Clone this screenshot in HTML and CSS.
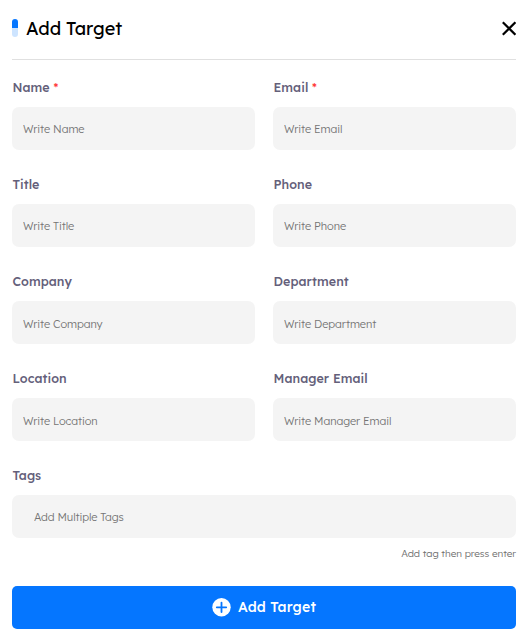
FILE: index.html
```html
<!DOCTYPE html>
<html lang="en">
<head>
<meta charset="utf-8">
<title>Add Target</title>
<link rel="stylesheet" href="styles.css">
</head>
<body>
<form class="panel">
  <header class="header">
    <span class="marker"></span>
    <h1 class="title">Add Target</h1>
    <button class="close" type="button" aria-label="Close">
      <svg width="14" height="15" viewBox="0 0 14 15"><path d="M0.8 1.2 13.4 13.8M13.4 1.2 0.8 13.8" stroke="#000" stroke-width="2.2" fill="none"/></svg>
    </button>
  </header>
  <div class="fields">
    <label class="field"><span class="label">Name <b class="required">*</b></span><input class="input" placeholder="Write Name"></label>
    <label class="field"><span class="label">Email <b class="required">*</b></span><input class="input" placeholder="Write Email"></label>
    <label class="field"><span class="label">Title</span><input class="input" placeholder="Write Title"></label>
    <label class="field"><span class="label">Phone</span><input class="input" placeholder="Write Phone"></label>
    <label class="field"><span class="label">Company</span><input class="input low" placeholder="Write Company"></label>
    <label class="field"><span class="label">Department</span><input class="input low" placeholder="Write Department"></label>
    <label class="field"><span class="label">Location</span><input class="input low" placeholder="Write Location"></label>
    <label class="field"><span class="label">Manager Email</span><input class="input low" placeholder="Write Manager Email"></label>
    <label class="field wide"><span class="label">Tags</span><input class="input tags" placeholder="Add Multiple Tags"></label>
  </div>
  <p class="hint">Add tag then press enter</p>
  <button class="submit" type="button">
    <svg width="19" height="19" viewBox="0 0 19 19"><circle cx="9.5" cy="9.2" r="9.2" fill="#fff"/><path d="M9.5 4.6v9.4M4.8 9.3h9.4" stroke="#0576ff" stroke-width="1.8" stroke-linecap="round"/></svg>
    <span>Add Target</span>
  </button>
</form>
</body>
</html>
```
FILE: styles.css
```css
* { box-sizing: border-box; }
body {
  margin: 0;
  background: #fff;
  font-family: Lexend, Inter, sans-serif;
}
.panel { padding: 0 11px 11px 12px; }
.header {
  display: flex;
  align-items: center;
  height: 60px;
  padding-bottom: 3px;
  border-bottom: 1px solid #e0e0e0;
}
.marker {
  width: 6px;
  height: 18px;
  border-radius: 3px;
  background: linear-gradient(#0576ff 50%, #cde4ff 50%);
}
.title {
  flex: 1;
  margin: 0 0 0 8px;
  padding-top: 2px;
  font-size: 18px;
  line-height: 24px;
  font-weight: 400;
  letter-spacing: 0;
  color: #000;
}
.close {
  display: flex;
  padding: 0;
  border: 0;
  background: none;
}
.fields {
  display: grid;
  grid-template-columns: 1fr 1fr;
  column-gap: 18px;
  row-gap: 27px;
  padding-top: 20px;
}
.field { display: flex; flex-direction: column; }
.wide { grid-column: 1 / -1; }
.label {
  height: 27px;
  padding-left: 0.5px;
  font-size: 12.5px;
  line-height: 14px;
  font-weight: 500;
  letter-spacing: 0.05px;
  color: #64607a;
}
.required { font-weight: 400; color: #ff3b3b; }
.input {
  width: 100%;
  height: 43px;
  padding: 1px 11px 0;
  border: 0;
  border-radius: 7px;
  background: #f4f4f4;
  font: 300 11px Lexend, Inter, sans-serif;
  letter-spacing: -0.1px;
}
.input::placeholder { color: #757575; opacity: 1; }
.low { padding-top: 3px; }
.tags { padding-left: 22px; }
.hint {
  margin: 8px 0 0;
  font-size: 10px;
  line-height: 16px;
  font-weight: 300;
  letter-spacing: -0.07px;
  text-align: right;
  color: #707070;
}
.submit {
  display: flex;
  align-items: center;
  justify-content: center;
  gap: 7px;
  width: 100%;
  height: 43px;
  margin-top: 24px;
  padding: 0 0 1px;
  border: 0;
  border-radius: 5px;
  background: #0576ff;
  color: #fff;
  font: 500 14px Lexend, Inter, sans-serif;
  letter-spacing: 0.2px;
}
```
